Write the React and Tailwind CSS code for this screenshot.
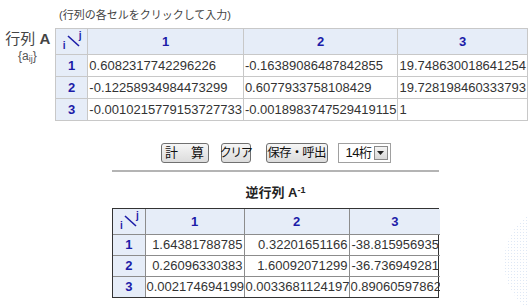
import React from "react";

const topRows = [
  ["0.6082317742296226", "-0.16389086487842855", "19.748630018641254"],
  ["-0.12258934984473299", "0.6077933758108429", "19.728198460333793"],
  ["-0.0010215779153727733", "-0.0018983747529419115", "1"],
];

const invRows = [
  ["1.64381788785", "0.32201651166", "-38.815956935"],
  ["0.26096330383", "1.60092071299", "-36.736949281"],
  ["0.002174694199", "0.0033681124197", "0.89060597862"],
];

function Corner({ h }) {
  return (
    <div className={"relative w-full text-[#1c1ca8] " + (h === 26 ? "h-[25px]" : "h-[24px]")}>
      <span className="absolute left-[7px] top-[12px] text-[10px] leading-[10px]">i</span>
      <svg className="absolute left-[11px] top-[6px]" width="13" height="12" viewBox="0 0 13 12">
        <line x1="1" y1="1" x2="12" y2="11" stroke="#1c1ca8" strokeWidth="1.6" />
      </svg>
      <span className="absolute left-[23px] top-[2px] text-[10px] leading-[10px]">j</span>
    </div>
  );
}

const btn =
  "h-[20px] border border-[#707070] rounded-[3px] bg-[linear-gradient(#f6f6f6,#dcdcdc)] leading-[18px] whitespace-nowrap flex items-center justify-center";

export default function App() {
  return (
    <div
      className="relative w-[528px] h-[305px] overflow-hidden bg-white text-[#333]"
      style={{ fontFamily: '"Liberation Sans", Arial, "Noto Sans CJK JP", sans-serif' }}
    >
      <div className="absolute left-[504px] top-[204px] w-[116px] h-[116px] rounded-full bg-[radial-gradient(#dfe8f5_0.8px,transparent_0.9px)] bg-[length:3px_3px]" />

      <div className="pl-[59px] pt-[9px] h-[28px] text-[11px] leading-[13px] text-[#444]">
        (行列の各セルをクリックして入力)
      </div>

      <div className="flex">
        <div className="w-[55px] flex flex-col items-center pt-[2px]">
          <div className="text-[15px] leading-[17px] text-[#444] pl-[1px]">
            行列 <span className="font-bold">A</span>
          </div>
          <div className="text-[12px] leading-[14px] mt-[2px] text-[#555]">
            {"{a"}
            <sub className="text-[9px]">ij</sub>
            {"}"}
          </div>
        </div>
        <table className="border-collapse text-[13px] table-fixed">
          <colgroup>
            <col className="w-[35px]" />
            <col className="w-[152px]" />
            <col className="w-[150px]" />
            <col className="w-[127px]" />
          </colgroup>
          <thead>
            <tr className="h-[26px]">
              <th className="border border-[#c8c8c8] bg-[#e6edf8] p-0">
                <Corner h={26} />
              </th>
              {["1", "2", "3"].map((h) => (
                <th key={h} className="border border-[#c8c8c8] bg-[#e6edf8] text-[#1c1ca8] font-bold text-center p-0">
                  {h}
                </th>
              ))}
            </tr>
          </thead>
          <tbody>
            {topRows.map((r, i) => (
              <tr key={i} className="h-[22px]">
                <td className="border border-[#c8c8c8] bg-[#e6edf8] text-[#1c1ca8] font-bold text-center p-0">
                  {i + 1}
                </td>
                {r.map((v, j) => (
                  <td key={j} className="border border-[#c8c8c8] px-[1px] py-0 whitespace-nowrap overflow-hidden">
                    {v}
                  </td>
                ))}
              </tr>
            ))}
          </tbody>
        </table>
      </div>

      <div className="ml-[112px] w-[327px] flex flex-col">
        <div className="flex items-center justify-center mt-[22px] h-[20px] text-[13px] text-[#111]">
          <button className={btn + " w-[48px]"}>
            <span>計</span>
            <span className="w-[13px]" />
            <span>算</span>
          </button>
          <button className={btn + " w-[30px] ml-[12px] text-[12px] tracking-[-1.5px]"}>
            クリア
          </button>
          <button className={btn + " w-[62px] ml-[15px] text-[12.5px] tracking-[-0.8px]"}>
            保存・呼出
          </button>
          <div className="h-[20px] w-[53px] ml-[10px] flex items-center border border-[#a0a0a0] bg-white">
            <span className="flex-1 pl-[7px] leading-[18px] whitespace-nowrap text-[13px] tracking-[-0.5px]">14桁</span>
            <span className="w-[14px] h-[14px] mr-[2px] shrink-0 flex items-center justify-center border border-[#8a8a8a] bg-[linear-gradient(#f4f4f4,#d8d8d8)]">
              <svg width="7" height="4" viewBox="0 0 7 4">
                <path d="M0 0h7L3.5 4z" fill="#222" />
              </svg>
            </span>
          </div>
        </div>

        <div className="mt-[7px] w-full border-t-2 border-[#b4b4b4]" />

        <div className="mt-[13px] h-[23px] text-center text-[13px] font-bold leading-[15px] text-[#222]">
          逆行列 A<sup className="text-[9px]">-1</sup>
        </div>

        <div className="w-[327px] border border-[#333]">
          <table className="w-full border-collapse border-hidden text-[13px] table-fixed">
            <colgroup>
              <col className="w-[32px]" />
              <col className="w-[99px]" />
              <col className="w-[105px]" />
              <col className="w-[91px]" />
            </colgroup>
            <thead>
              <tr className="h-[25px]">
                <th className="border border-[#8c8c8c] bg-[#e6edf8] p-0">
                  <Corner h={25} />
                </th>
                {["1", "2", "3"].map((h) => (
                  <th key={h} className="border border-[#8c8c8c] bg-[#e6edf8] text-[#1c1ca8] font-bold text-center p-0">
                    {h}
                  </th>
                ))}
              </tr>
            </thead>
            <tbody>
              {invRows.map((r, i) => (
                <tr key={i} className="h-[21px]">
                  <td className="border border-[#8c8c8c] bg-[#e6edf8] text-[#1c1ca8] font-bold text-center p-0">
                    {i + 1}
                  </td>
                  {r.map((v, j) => (
                    <td key={j} className="border border-[#8c8c8c] px-[1px] py-0 text-right whitespace-nowrap overflow-hidden">
                      {v}
                    </td>
                  ))}
                </tr>
              ))}
            </tbody>
          </table>
        </div>
      </div>
    </div>
  );
}
